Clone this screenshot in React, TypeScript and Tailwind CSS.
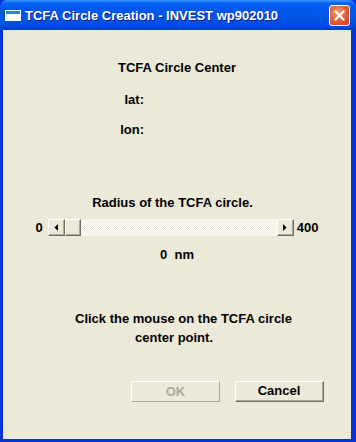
import React from 'react';

const ArrowLeft = () => (
  <svg width="4" height="7" viewBox="0 0 4 7">
    <path d="M4 0 L4 7 L0.5 3.5 Z" fill="#000" />
  </svg>
);

const ArrowRight = () => (
  <svg width="4" height="7" viewBox="0 0 4 7">
    <path d="M0 0 L0 7 L3.5 3.5 Z" fill="#000" />
  </svg>
);

const Bevel: React.FC<{ className?: string; children?: React.ReactNode }> = ({ className = '', children }) => (
  <div className={`border border-t-white border-l-white border-r-[#716F64] border-b-[#716F64] ${className}`}>
    <div className="flex h-full w-full items-center justify-center border-r border-b border-[#ACA899] bg-[#ECE9D8]">
      {children}
    </div>
  </div>
);

const App: React.FC = () => {
  return (
    <div className="flex h-[442px] w-[356px] flex-col overflow-hidden bg-[#0831D9] font-['Liberation_Sans',Arial,sans-serif]">
      {/* Title bar */}
      <div className="flex h-[30px] shrink-0 items-center rounded-t-[7px] bg-[linear-gradient(to_bottom,#3D95FF_0px,#0A66F6_3px,#0058EE_8px,#0054E3_20px,#0049D5_27px,#003DCB_30px)] pl-[5px] pr-[6px]">
        <div className="h-[11px] w-[16px] border border-white bg-white">
          <div className="h-[3px] w-full bg-[#3A7BE8]" />
        </div>
        <span className="ml-[4px] mt-[1px] text-[13px] font-bold leading-none text-white [text-shadow:1px_1px_0_#0F1E87]">
          TCFA Circle Creation - INVEST wp902010
        </span>
        <div className="ml-auto flex h-[21px] w-[21px] items-center justify-center rounded-[3px] border border-white bg-[radial-gradient(circle_at_40%_35%,#F29F7D,#E2572E_60%,#C8401B)]">
          <svg width="11" height="11" viewBox="0 0 11 11">
            <path d="M1.5 1.5 L9.5 9.5 M9.5 1.5 L1.5 9.5" stroke="#fff" strokeWidth="2" strokeLinecap="square" />
          </svg>
        </div>
      </div>

      {/* Body */}
      <div className="ml-[3px] mr-[5px] mb-[3px] flex flex-1 flex-col bg-[#ECE9D8] text-[13px] font-bold leading-[14px] text-black">
        <div className="pt-[31px] text-center">TCFA Circle Center</div>

        <div className="mt-[18px] w-[141px] text-right">lat:</div>
        <div className="mt-[16px] w-[141px] text-right">lon:</div>

        <div className="mt-[59px] pr-[9px] text-center">Radius of the TCFA circle.</div>

        <div className="mt-[9px] flex h-[17px] items-center justify-center">
          <span>0</span>
          <div className="ml-[5px] flex h-[17px] w-[246px]">
            <Bevel className="h-[17px] w-[17px]">
              <ArrowLeft />
            </Bevel>
            <Bevel className="h-[17px] w-[16px]" />
            <div className="flex-1 bg-[repeating-conic-gradient(#FFFFFF_0_25%,#ECE9D8_0_50%)] bg-[length:2px_2px]" />
            <Bevel className="h-[17px] w-[17px]">
              <ArrowRight />
            </Bevel>
          </div>
          <span className="ml-[3px]">400</span>
        </div>

        <div className="mt-[12px] text-center">0&nbsp; nm</div>

        <div className="mt-[47px] flex flex-col leading-[19px]">
          <div className="pl-[72px]">Click the mouse on the TCFA circle</div>
          <div className="pl-[132px]">center point.</div>
        </div>

        <div className="mt-[34px] flex justify-end gap-[15px] pr-[27px]">
          <div className="flex h-[21px] w-[89px] items-center justify-center border border-t-white border-l-white border-r-[#ACA899] border-b-[#ACA899] text-[#ACA899]">
            OK
          </div>
          <Bevel className="h-[21px] w-[89px]">
            <span>Cancel</span>
          </Bevel>
        </div>
      </div>
    </div>
  );
};

export default App;
